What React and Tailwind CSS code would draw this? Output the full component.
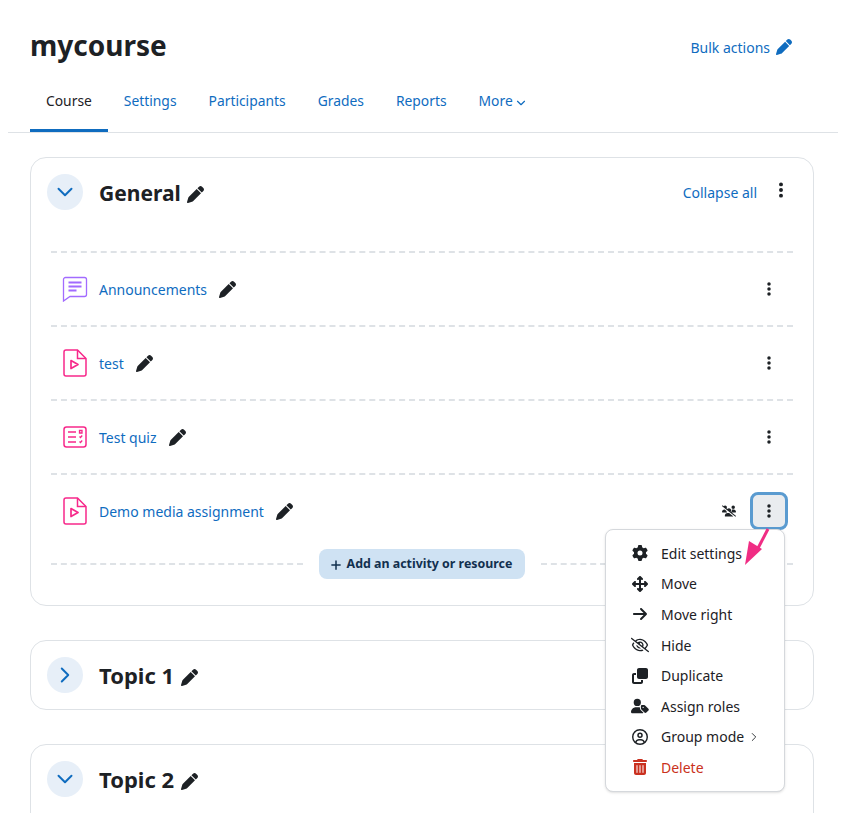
import React from 'react';
import {
  FaPen,
  FaGear,
  FaArrowsUpDownLeftRight,
  FaArrowRight,
  FaRegEyeSlash,
  FaClone,
  FaUserTag,
  FaRegCircleUser,
  FaTrashCan,
  FaUsersSlash,
  FaEllipsisVertical,
  FaPlus,
} from 'react-icons/fa6';
import { ChevronDown, ChevronRight } from 'lucide-react';

const ForumIcon = () => (
  <svg width="26" height="26" viewBox="0 0 26 26" fill="none" className="text-[#a26bff]">
    <path d="M3.5 1.5h19a2 2 0 0 1 2 2v15a2 2 0 0 1-2 2H8l-6.5 4.5V3.5a2 2 0 0 1 2-2z" stroke="currentColor" strokeWidth="1.3" />
    <path d="M6.5 6.5h13M6.5 10.5h13M6.5 14.5h8" stroke="currentColor" strokeWidth="2" />
  </svg>
);

const MediaIcon = () => (
  <svg width="24" height="28" viewBox="0 0 24 28" fill="none" className="text-[#f7288a]">
    <path d="M3 1h11.5L23 9.5V25a2 2 0 0 1-2 2H3a2 2 0 0 1-2-2V3a2 2 0 0 1 2-2z" stroke="currentColor" strokeWidth="1.5" />
    <path d="M14.5 1v8.5H23" stroke="currentColor" strokeWidth="1.5" />
    <path d="M8 11.5l7 4-7 4z" stroke="currentColor" strokeWidth="1.7" strokeLinejoin="round" />
  </svg>
);

const QuizIcon = () => (
  <svg width="24" height="22" viewBox="0 0 24 22" fill="none" className="text-[#f7288a]">
    <rect x="1" y="1" width="22" height="20" rx="2.5" stroke="currentColor" strokeWidth="1.5" />
    <path d="M5 6h8M5 11h8M5 16h8" stroke="currentColor" strokeWidth="1.7" />
    <path d="M16.5 4.5h2.5v2.5h-2.5zM16.5 10.5l1 1 1.7-2M16.5 15.5l1 1 1.7-2" stroke="currentColor" strokeWidth="1.3" />
  </svg>
);

const tabs = ['Course', 'Settings', 'Participants', 'Grades', 'Reports'];

const activities = [
  { name: 'Announcements', icon: <ForumIcon /> },
  { name: 'test', icon: <MediaIcon /> },
  { name: 'Test quiz', icon: <QuizIcon /> },
  { name: 'Demo media assignment', icon: <MediaIcon />, active: true },
];

const menuItems = [
  { label: 'Edit settings', icon: <FaGear className="size-4" /> },
  { label: 'Move', icon: <FaArrowsUpDownLeftRight className="size-4" /> },
  { label: 'Move right', icon: <FaArrowRight className="size-4" /> },
  { label: 'Hide', icon: <FaRegEyeSlash className="size-[18px]" /> },
  { label: 'Duplicate', icon: <FaClone className="size-4" /> },
  { label: 'Assign roles', icon: <FaUserTag className="size-[18px]" /> },
  { label: 'Group mode', icon: <FaRegCircleUser className="size-4" />, more: true },
  { label: 'Delete', icon: <FaTrashCan className="size-4" />, danger: true },
];

const SectionHeader = ({ title, open, small }) => (
  <div className="flex items-center">
    <div className="flex size-9 items-center justify-center rounded-full bg-[#e7eff8] text-[#0f6cbf]">
      {open ? <ChevronDown className="size-[26px]" strokeWidth={1.8} /> : <ChevronRight className="size-[26px]" strokeWidth={1.8} />}
    </div>
    <h3 className={`ml-4 leading-none font-bold text-[#1d2125] ${small ? 'mt-[2px] text-[21px]' : 'text-[22px]'}`}>{title}</h3>
    <FaPen className={`mt-[4px] size-[17px] text-[#1d2125] ${small ? 'ml-[6px]' : 'ml-[7px]'}`} />
  </div>
);

const ActivityMenu = () => (
  <div className="absolute top-[54px] right-[8px] z-10 w-[180px] rounded-lg border border-[#d5d8dc] bg-white py-[8px] shadow-sm">
    {menuItems.map((item) => (
      <div
        key={item.label}
        className={`flex h-[30.6px] items-center pl-[24px] ${item.danger ? 'text-[#ca3120]' : 'text-[#1d2125]'}`}
      >
        <span className="flex w-[20px] justify-center">{item.icon}</span>
        <span className="ml-[11px]">{item.label}</span>
        {item.more && <ChevronRight className="ml-[3px] size-3.5" strokeWidth={1.5} />}
      </div>
    ))}
  </div>
);

const PointerArrow = () => (
  <svg width="28" height="38" viewBox="0 0 28 38" className="absolute top-[53px] right-[21px] z-20" fill="none">
    <path d="M24 1L12 24" stroke="#f02d84" strokeWidth="3" />
    <path d="M1 37L5 13L18 21z" fill="#f02d84" />
  </svg>
);

export default function App() {
  return (
    <div className="min-h-[813px] overflow-hidden bg-white font-['Noto_Sans',sans-serif] text-[14px] text-[#1d2125]">
      {/* Header */}
      <div className="mx-[8px] w-[830px] border-b border-[#dee2e6]">
        <div className="flex items-center justify-between pt-[28px] pr-[46px] pl-[22px]">
          <h1 className="text-[28px] leading-[34px] font-bold text-[#1d2125]">mycourse</h1>
          <a className="mt-[4px] flex items-center text-[#0f6cbf]">
            Bulk actions
            <FaPen className="ml-[6px] size-4" />
          </a>
        </div>
        <nav className="mt-[21px] flex pl-[22px] text-[13.85px]">
          {tabs.map((tab, i) => (
            <a
              key={tab}
              className={`-mb-px h-[49px] border-b-[3px] px-4 pt-[8px] ${
                i === 0 ? 'border-[#0f6cbf] text-[#1d2125]' : 'border-transparent text-[#0f6cbf]'
              }`}
            >
              {tab}
            </a>
          ))}
          <a className="flex h-[49px] items-start px-4 pt-[8px] text-[#0f6cbf]">
            More
            <ChevronDown className="mt-[5px] ml-[1px] size-3.5" strokeWidth={2} />
          </a>
        </nav>
      </div>

      <div className="mt-[24px] ml-[30px] flex w-[784px] flex-col gap-[34px]">
        {/* General */}
        <section className="h-[449px] rounded-2xl border border-[#dee2e6] px-[16px] pt-[16px]">
          <div className="flex items-center justify-between">
            <SectionHeader title="General" open small />
            <div className="flex items-center pr-[7px]">
              <a className="text-[#0f6cbf]">Collapse all</a>
              <FaEllipsisVertical className="mb-1 ml-[15px] size-[18px]" />
            </div>
          </div>

          <div className="mx-[4px] mt-[41px]">
            {activities.map((act) => (
              <div key={act.name} className="relative flex h-[74px] items-center border-t-2 border-dashed border-[#dee2e6]">
                <span className="flex w-[48px] justify-center">{act.icon}</span>
                <a className="text-[#0f6cbf]">{act.name}</a>
                <FaPen className="ml-[12px] size-[17px] text-[#1d2125]" />
                <div className="ml-auto flex items-center">
                  {act.active && <FaUsersSlash className="mr-[14px] size-[14px]" />}
                  <span
                    className={`flex items-center justify-center rounded-lg ${
                      act.active ? 'mr-[5px] size-[38px] border-[3px] border-[#5a9bd0] bg-[#e9ecef]' : 'mr-[6px] size-[36px]'
                    }`}
                  >
                    <FaEllipsisVertical className="size-4" />
                  </span>
                </div>
                {act.active && <ActivityMenu />}
                {act.active && <PointerArrow />}
              </div>
            ))}
            <div className="mt-[2px] flex items-center">
              <div className="h-0 flex-1 border-t-2 border-dashed border-[#dee2e6]" />
              <button className="mx-[16px] flex h-[30px] w-[206px] items-center justify-center rounded-lg bg-[#cfe2f3] pt-px pr-[2px] text-[12.4px] font-bold text-[#12304f]">
                <FaPlus className="mr-[5px] size-3" />
                Add an activity or resource
              </button>
              <div className="h-0 flex-1 border-t-2 border-dashed border-[#dee2e6]" />
            </div>
          </div>
        </section>

        {/* Topics */}
        <section className="h-[70px] rounded-2xl border border-[#dee2e6] px-[16px] pt-[16px]">
          <SectionHeader title="Topic 1" />
        </section>
        <section className="h-[120px] rounded-2xl border border-[#dee2e6] px-[16px] pt-[16px]">
          <SectionHeader title="Topic 2" open />
        </section>
      </div>
    </div>
  );
}
